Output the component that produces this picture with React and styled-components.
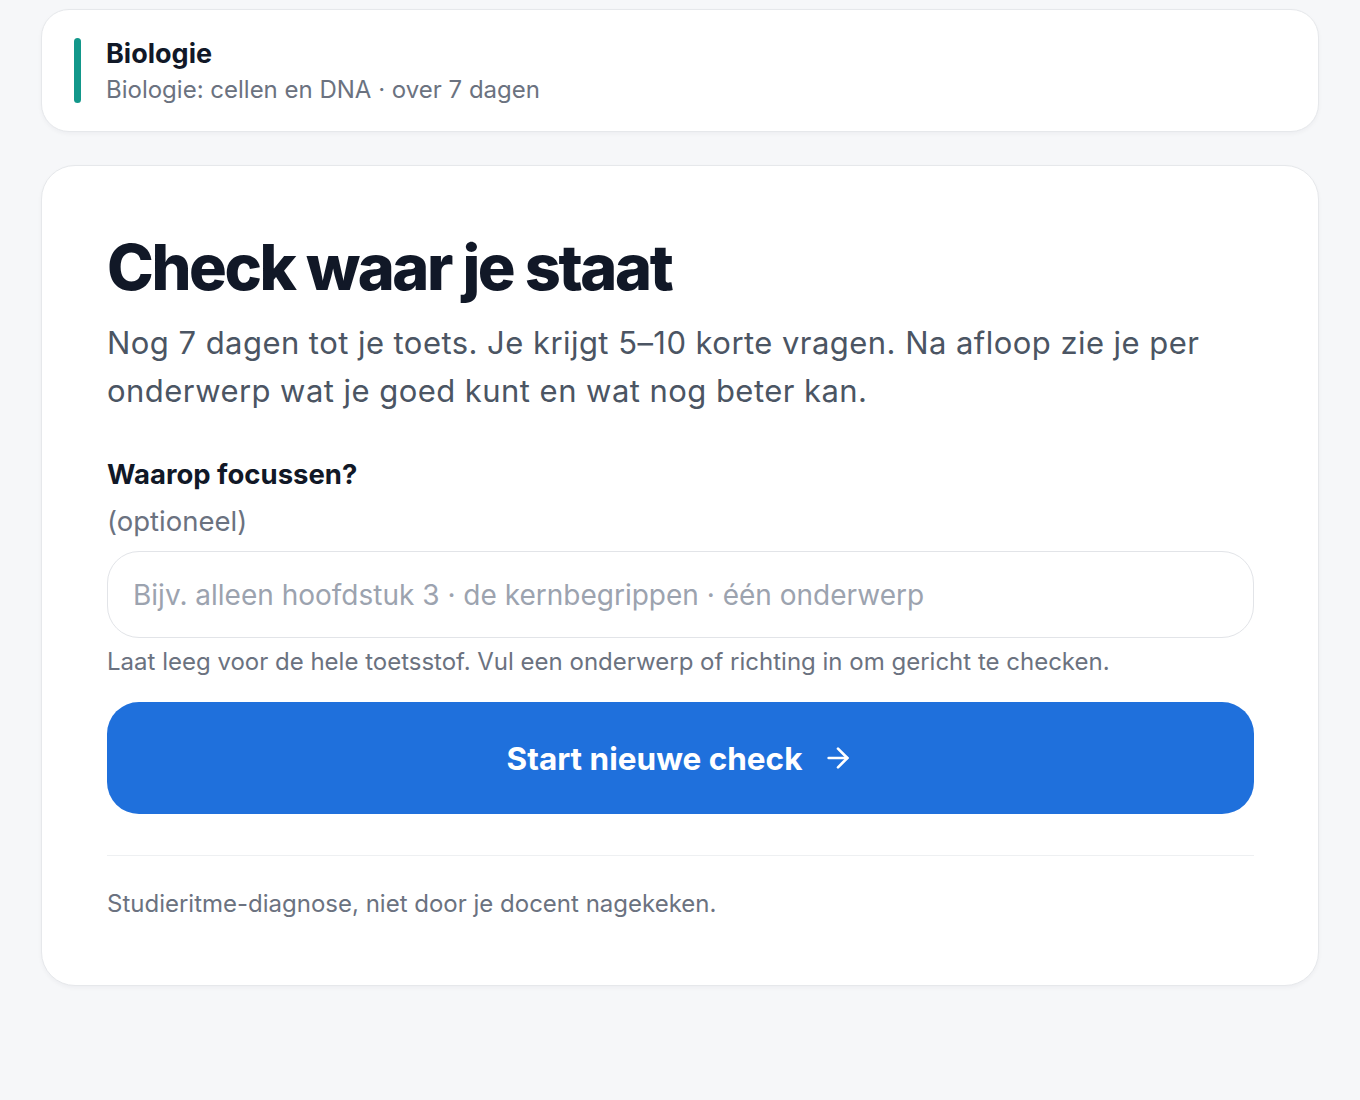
import React from "react";
import styled, { createGlobalStyle } from "styled-components";

const GlobalStyle = createGlobalStyle`
  body {
    margin: 0;
    background: #f6f7f9;
    font-family: Inter, "Noto Sans", sans-serif;
    -webkit-font-smoothing: antialiased;
  }
`;

const Page = styled.div`
  display: flex;
  flex-direction: column;
  gap: 33px;
  padding: 9px 41px 40px;
`;

const Card = styled.div`
  background: #ffffff;
  border: 1.5px solid #e6e8eb;
  border-radius: ${(props) => (props.big ? "34px" : "28px")};
  box-shadow: 0 2px 4px rgba(15, 23, 42, 0.04);
`;

const SubjectCard = styled(Card)`
  display: flex;
  align-items: stretch;
  gap: 25px;
  padding: 26px 32px 25px;
`;

const Accent = styled.div`
  width: 7px;
  margin: 2px 0 3px;
  border-radius: 4px;
  background: #12978a;
`;

const SubjectText = styled.div`
  display: flex;
  flex-direction: column;
  gap: 4px;
  padding-top: 2px;
`;

const SubjectName = styled.div`
  font-size: 27px;
  font-weight: 700;
  color: #111827;
  line-height: 32px;
`;

const SubjectMeta = styled.div`
  font-size: 24px;
  color: #6b7280;
  line-height: 32px;
`;

const MainCard = styled(Card)`
  padding: 66px 64px 65px 65px;
  display: flex;
  flex-direction: column;
`;

const Heading = styled.h1`
  margin: 0;
  font-size: 63px;
  font-weight: 800;
  letter-spacing: -2.4px;
  line-height: 70px;
  color: #111827;
`;

const Intro = styled.p`
  margin: 17px 0 0;
  font-size: 31px;
  letter-spacing: 0.45px;
  line-height: 48px;
  color: #4b5563;
`;

const Label = styled.div`
  margin-top: 39px;
  font-size: 27.5px;
  font-weight: 700;
  color: #111827;
  line-height: 40px;
`;

const Optional = styled.div`
  margin-top: 7px;
  font-size: 27.5px;
  color: #6b7280;
  line-height: 40px;
`;

const Input = styled.input`
  margin-top: 10px;
  box-sizing: border-box;
  width: 100%;
  height: 87px;
  border: 1.5px solid #e2e4e8;
  border-radius: 32px;
  padding: 0 25px;
  font-family: inherit;
  font-size: 28px;
  color: #111827;
  outline: none;
  &::placeholder {
    color: #9ca3af;
  }
`;

const Hint = styled.div`
  margin-top: 8px;
  font-size: 24px;
  line-height: 32px;
  color: #6b7280;
`;

const StartButton = styled.button`
  margin-top: 24px;
  height: 112px;
  border: none;
  border-radius: 32px;
  background: #1f70dc;
  color: #ffffff;
  font-family: inherit;
  font-size: 31.5px;
  font-weight: 700;
  display: flex;
  align-items: center;
  justify-content: center;
  gap: 20px;
  cursor: pointer;
`;

const Divider = styled.hr`
  margin: 41px 0 0;
  border: none;
  border-top: 1.5px solid #eef0f2;
`;

const Footer = styled.div`
  margin-top: 32px;
  font-size: 24px;
  line-height: 32px;
  color: #6b7280;
`;

const Arrow = () => (
  <svg width="32" height="32" viewBox="0 0 24 24" fill="none" stroke="currentColor" strokeWidth="2" strokeLinecap="round" strokeLinejoin="round">
    <path d="M5 12h14" />
    <path d="M12 5l7 7-7 7" />
  </svg>
);

export default function App() {
  return (
    <>
      <GlobalStyle />
      <Page>
        <SubjectCard>
          <Accent />
          <SubjectText>
            <SubjectName>Biologie</SubjectName>
            <SubjectMeta>Biologie: cellen en DNA · over 7 dagen</SubjectMeta>
          </SubjectText>
        </SubjectCard>
        <MainCard big>
          <Heading>Check waar je staat</Heading>
          <Intro>
            Nog 7 dagen tot je toets. Je krijgt 5–10 korte vragen. Na afloop zie je per
            onderwerp wat je goed kunt en wat nog beter kan.
          </Intro>
          <Label>Waarop focussen?</Label>
          <Optional>(optioneel)</Optional>
          <Input placeholder="Bijv. alleen hoofdstuk 3 · de kernbegrippen · één onderwerp" />
          <Hint>
            Laat leeg voor de hele toetsstof. Vul een onderwerp of richting in om gericht te checken.
          </Hint>
          <StartButton>
            Start nieuwe check
            <Arrow />
          </StartButton>
          <Divider />
          <Footer>Studieritme-diagnose, niet door je docent nagekeken.</Footer>
        </MainCard>
      </Page>
    </>
  );
}
